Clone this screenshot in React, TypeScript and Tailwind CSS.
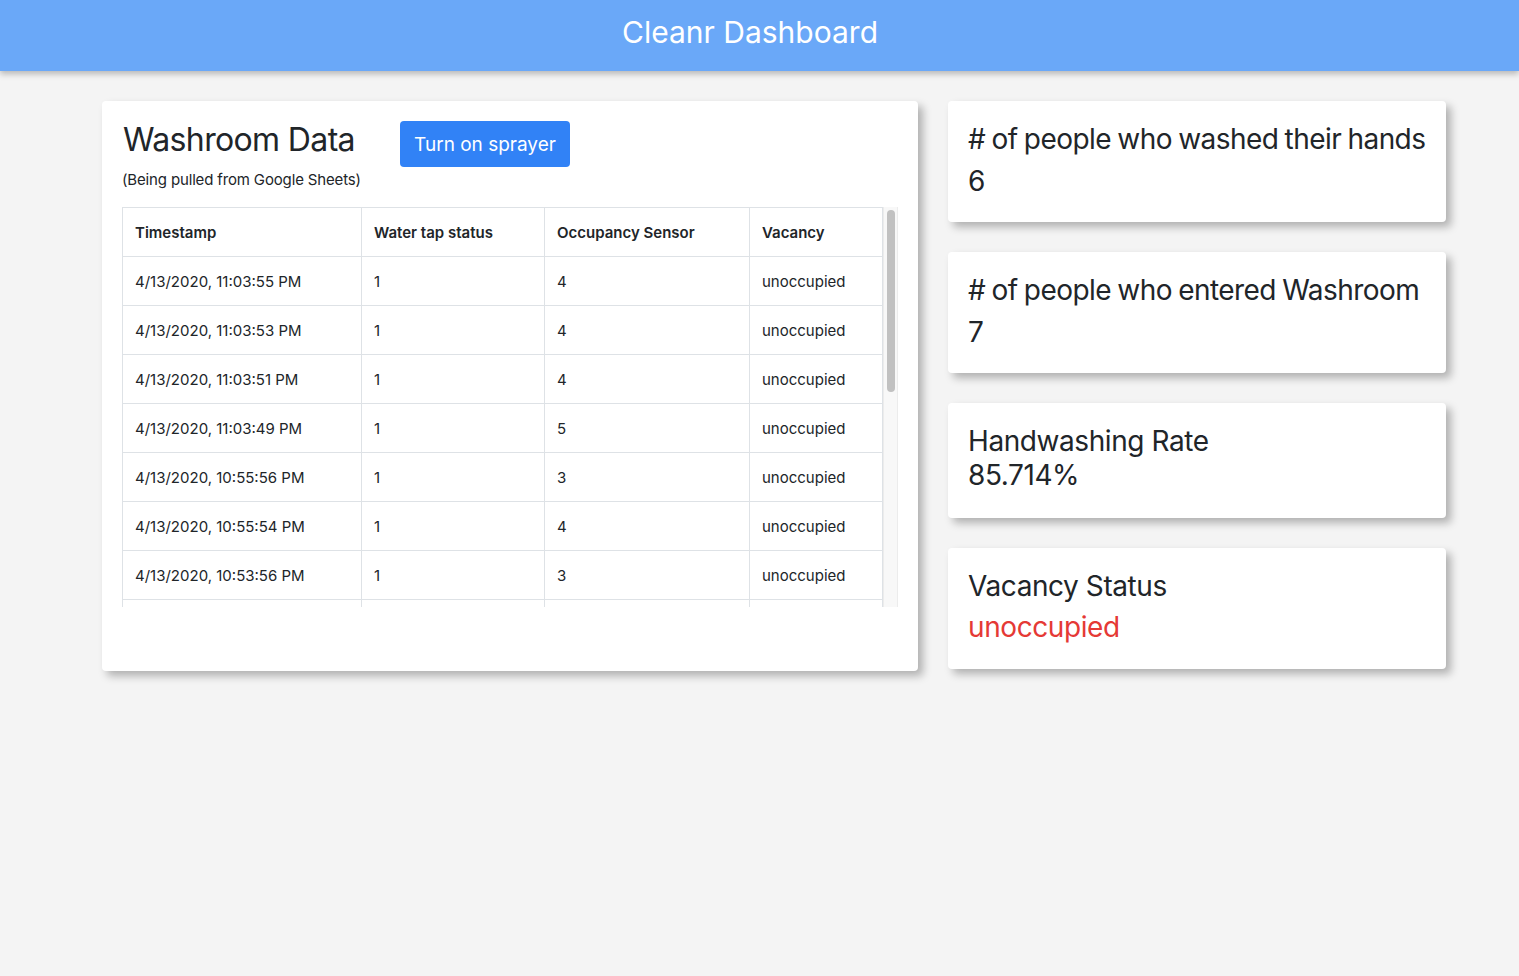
import React from "react";

const rows = [
  ["4/13/2020, 11:03:55 PM", "1", "4", "unoccupied"],
  ["4/13/2020, 11:03:53 PM", "1", "4", "unoccupied"],
  ["4/13/2020, 11:03:51 PM", "1", "4", "unoccupied"],
  ["4/13/2020, 11:03:49 PM", "1", "5", "unoccupied"],
  ["4/13/2020, 10:55:56 PM", "1", "3", "unoccupied"],
  ["4/13/2020, 10:55:54 PM", "1", "4", "unoccupied"],
  ["4/13/2020, 10:53:56 PM", "1", "3", "unoccupied"],
  ["4/13/2020, 10:53:54 PM", "0", "3", "unoccupied"],
  ["4/13/2020, 10:51:22 PM", "1", "2", "unoccupied"],
  ["4/13/2020, 10:51:20 PM", "1", "2", "unoccupied"],
  ["4/13/2020, 10:49:10 PM", "1", "1", "unoccupied"],
  ["4/13/2020, 10:49:08 PM", "0", "1", "unoccupied"],
  ["4/13/2020, 10:47:31 PM", "1", "0", "unoccupied"],
  ["4/13/2020, 10:47:29 PM", "1", "0", "unoccupied"],
  ["4/13/2020, 10:45:02 PM", "0", "0", "unoccupied"],
  ["4/13/2020, 10:45:00 PM", "0", "0", "unoccupied"],
];

const cardShadow = "shadow-[5px_5px_8px_rgba(0,0,0,0.28)]";

function StatCard({
  title,
  value,
  gap,
  red,
  tight,
}: {
  title: string;
  value: string;
  gap: boolean;
  red?: boolean;
  tight?: boolean;
}) {
  return (
    <div className={`bg-white rounded-[4px] ${cardShadow} px-5 pt-[22px] ${gap ? "pb-[24px]" : "pb-[25px]"}`}>
      <div
        className={`text-[28px] leading-[1.2] whitespace-nowrap ${
          tight ? "tracking-[-0.02em] [word-spacing:-1px]" : "tracking-[-0.015em]"
        } ${gap ? "mb-2" : ""}`}
      >
        {title}
      </div>
      <div className={`text-[28px] leading-[1.2] tracking-[-0.015em] ${red ? "text-[#e53935]" : ""}`}>{value}</div>
    </div>
  );
}

export default function App() {
  return (
    <div
      className="min-h-[976px] bg-[#f4f4f4] text-[#212529]"
      style={{ fontFamily: "Inter, 'Noto Sans', sans-serif" }}
    >
      <header className="h-[71px] bg-[#6aa8f8] flex items-center justify-center pr-[19px] pb-2 shadow-[0_3px_6px_rgba(0,0,0,0.25)]">
        <h1 className="text-white text-[30px] leading-none">Cleanr Dashboard</h1>
      </header>

      <main className="flex items-start gap-[30px] pl-[102px] pt-[30px]">
        <section className={`w-[816px] bg-white rounded-[4px] ${cardShadow} pl-5 pr-5 pt-5 pb-[64px]`}>
          <div className="flex items-start">
            <h2 className="w-[278px] text-[32px] leading-[1.2] pl-px tracking-[-0.02em]">Washroom Data</h2>
            <button className="h-[46px] w-[170px] bg-[#3182f6] text-white rounded-[4px] text-[19px] leading-none">
              Turn on sprayer
            </button>
          </div>
          <p className="text-[15px] leading-6 tracking-[-0.01em] mt-px mb-[15px]">(Being pulled from Google Sheets)</p>

          <div className="flex h-[400px]">
            <div className="flex-1 overflow-hidden">
              <table className="w-full border-collapse text-[15px] leading-6">
                <thead>
                  <tr>
                    <th className="w-[239px] border border-[#dee2e6] px-3 pt-[13px] pb-[11px] text-left font-semibold">Timestamp</th>
                    <th className="w-[183px] border border-[#dee2e6] px-3 pt-[13px] pb-[11px] text-left font-semibold">Water tap status</th>
                    <th className="w-[205px] border border-[#dee2e6] px-3 pt-[13px] pb-[11px] text-left font-semibold">Occupancy Sensor</th>
                    <th className="border border-[#dee2e6] px-3 pt-[13px] pb-[11px] text-left font-semibold">Vacancy</th>
                  </tr>
                </thead>
                <tbody>
                  {rows.map((r, i) => (
                    <tr key={i}>
                      {r.map((c, j) => (
                        <td key={j} className="border border-[#dee2e6] px-3 pt-[13px] pb-[11px]">
                          {c}
                        </td>
                      ))}
                    </tr>
                  ))}
                </tbody>
              </table>
            </div>
            <div className="w-[15px] shrink-0 bg-[#f8f8f8] border-l border-r border-[#ececec] pt-[3px] pl-[3px]">
              <div className="w-[8px] h-[182px] rounded-full bg-[#c1c1c1]" />
            </div>
          </div>
        </section>

        <aside className="w-[498px] flex flex-col gap-[30px]">
          <StatCard title="# of people who washed their hands" value="6" gap tight />
          <StatCard title="# of people who entered Washroom" value="7" gap tight />
          <StatCard title="Handwashing Rate" value="85.714%" gap={false} />
          <StatCard title="Vacancy Status" value="unoccupied" gap red />
        </aside>
      </main>
    </div>
  );
}
